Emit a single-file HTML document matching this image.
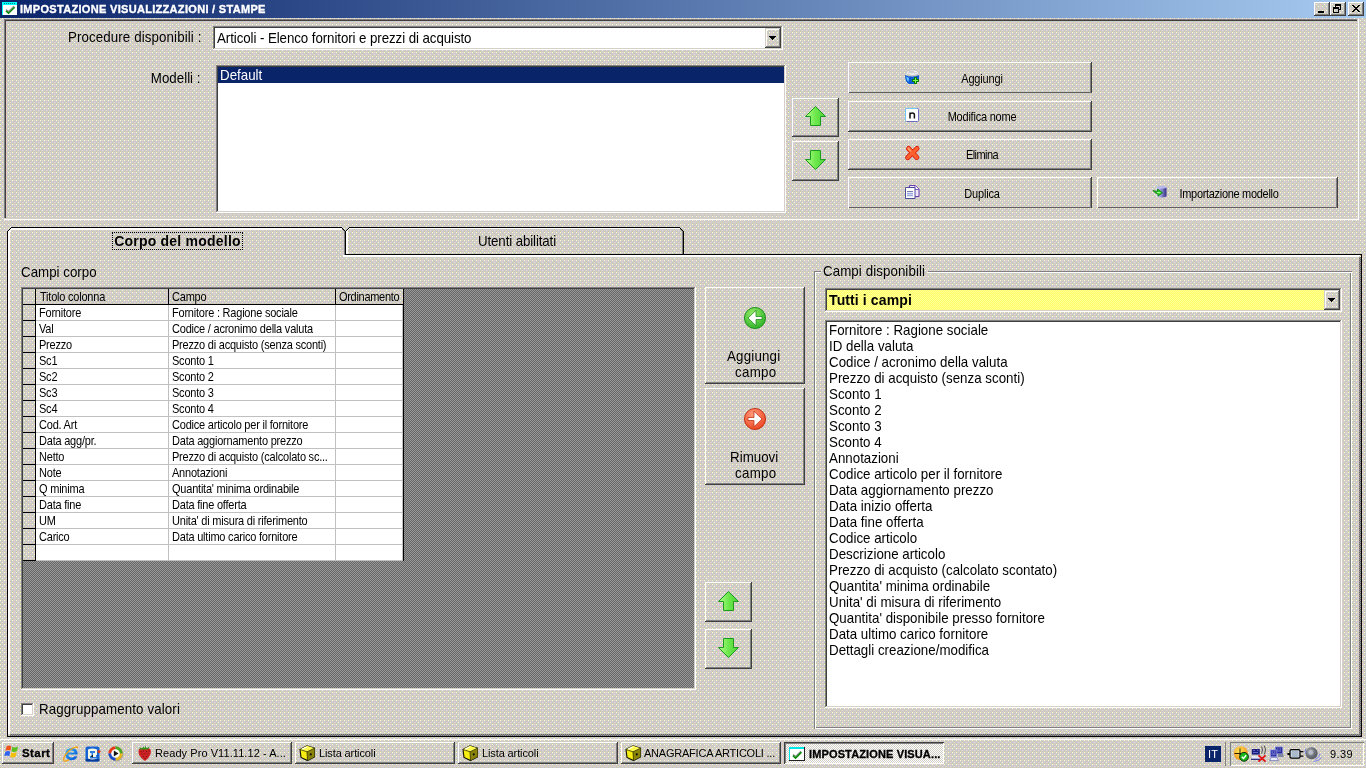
<!DOCTYPE html>
<html><head><meta charset="utf-8"><title>IMPOSTAZIONE VISUALIZZAZIONI / STAMPE</title>
<style>
*{box-sizing:border-box;margin:0;padding:0}
html,body{width:1366px;height:768px;overflow:hidden;background:#D4D0C8}
body{position:relative;font-family:"Liberation Sans",sans-serif;font-size:13.33px;color:#000;line-height:1}
.a{position:absolute;white-space:nowrap}
.btn{position:absolute;box-shadow:inset -1px -1px 0 #404040,inset 1px 1px 0 #fff,inset -2px -2px 0 #808080}
.btn2{position:absolute;box-shadow:inset -1px 0 0 #404040,inset 1px 1px 0 #fff,inset -2px 0 0 #808080,inset 0 -1px 0 #606060}
.sbtn{position:absolute;box-shadow:inset -1px -1px 0 #404040,inset 1px 1px 0 #D4D0C8,inset -2px -2px 0 #808080,inset 2px 2px 0 #fff}
.sunk{position:absolute;background:#fff;box-shadow:inset -1px -1px 0 #fff,inset 1px 1px 0 #808080,inset -2px -2px 0 #D4D0C8,inset 2px 2px 0 #404040}
.t{position:absolute;white-space:nowrap;line-height:16px;height:16px;will-change:transform}
.m{transform:scaleY(1.05);transform-origin:0 12px}
.s11{font-size:11px;letter-spacing:-0.215px;transform:scaleY(1.13);transform-origin:0 12px}
.n{transform:scaleY(1.13);transform-origin:0 12px}
.b{font-weight:bold}
.c{text-align:center}
.r{text-align:right}
svg{position:absolute;overflow:visible}
</style></head><body>

<svg width="1366" height="768" style="left:0;top:0" shape-rendering="crispEdges">
<defs>
<pattern id="dz" width="8" height="8" patternUnits="userSpaceOnUse"><rect width="8" height="8" fill="#CCCCCC"/><rect x="0" y="0" width="1" height="1" fill="#FFFFCC"/><rect x="2" y="0" width="1" height="1" fill="#FFCCCC"/><rect x="4" y="0" width="1" height="1" fill="#FFFFCC"/><rect x="6" y="1" width="1" height="1" fill="#CCCC99"/><rect x="2" y="2" width="1" height="1" fill="#FFFFCC"/><rect x="6" y="2" width="1" height="1" fill="#FFCCCC"/><rect x="0" y="3" width="1" height="1" fill="#CCCC99"/><rect x="4" y="3" width="1" height="1" fill="#CCCC99"/><rect x="0" y="4" width="1" height="1" fill="#FFFFCC"/><rect x="4" y="4" width="1" height="1" fill="#FFFFCC"/><rect x="6" y="4" width="1" height="1" fill="#FFCCCC"/><rect x="2" y="5" width="1" height="1" fill="#CCCC99"/><rect x="2" y="6" width="1" height="1" fill="#FFCCCC"/><rect x="6" y="6" width="1" height="1" fill="#FFCCCC"/><rect x="0" y="7" width="1" height="1" fill="#CCCC99"/><rect x="4" y="7" width="1" height="1" fill="#CCCC99"/></pattern>
<pattern id="gz" width="2" height="2" patternUnits="userSpaceOnUse"><rect width="2" height="2" fill="#666666"/><rect x="0" y="0" width="1" height="1" fill="#999999"/><rect x="1" y="1" width="1" height="1" fill="#999999"/></pattern>
<pattern id="yz" width="2" height="2" patternUnits="userSpaceOnUse"><rect width="2" height="2" fill="#FFFF66"/><rect x="0" y="0" width="1" height="1" fill="#FFFF99"/><rect x="1" y="1" width="1" height="1" fill="#FFFF99"/></pattern><pattern id="wz" width="2" height="2" patternUnits="userSpaceOnUse"><rect width="2" height="2" fill="#FFFFFF"/><rect x="0" y="0" width="1" height="1" fill="#D4D0C8"/><rect x="1" y="1" width="1" height="1" fill="#D4D0C8"/></pattern>
<linearGradient id="tg" x1="0" x2="1" y1="0" y2="0"><stop offset="0" stop-color="#0A246A"/><stop offset="1" stop-color="#A6CAF0"/></linearGradient>
</defs>
<rect width="1366" height="768" fill="url(#dz)"/>
<rect width="1366" height="18" fill="url(#tg)"/>
</svg>

<div class="t b" style="left:20px;top:1px;font-size:11px;color:#fff;letter-spacing:0.31px;-webkit-text-stroke:0.35px #fff">IMPOSTAZIONE VISUALIZZAZIONI / STAMPE</div>
<svg width="16" height="16" style="left:2px;top:1px" shape-rendering="crispEdges"><rect x="0" y="1" width="15" height="13" fill="#fff"/><rect x="0" y="1" width="15" height="3" fill="#00FFFF"/><rect x="0" y="1" width="1" height="13" fill="#00FFFF"/><path d="M1.5 2.5H13.5" stroke="#008080" stroke-width="1" stroke-dasharray="1 1"/><path d="M4 8.6L6.6 10.6L12.2 5.2" fill="none" stroke="#909090" stroke-width="1.4" shape-rendering="auto"/><path d="M4 9.8L6.6 12.2L12.6 6.2" fill="none" stroke="#0A8C0A" stroke-width="1.6" shape-rendering="auto"/></svg>
<svg width="16" height="14" style="left:1314px;top:2px" shape-rendering="crispEdges"><rect width="16" height="14" fill="url(#dz)"/><rect x="4" y="9" width="6" height="2" fill="#000"/></svg>
<div class="btn" style="left:1314px;top:2px;width:16px;height:14px"></div>
<svg width="16" height="14" style="left:1330px;top:2px" shape-rendering="crispEdges"><rect width="16" height="14" fill="url(#dz)"/><rect x="5" y="2" width="6" height="2" fill="#000"/><rect x="5" y="2" width="1" height="4" fill="#000"/><rect x="10" y="2" width="1" height="6" fill="#000"/><rect x="8" y="7" width="3" height="1" fill="#000"/><rect x="3" y="5" width="6" height="2" fill="#000"/><rect x="3" y="5" width="1" height="6" fill="#000"/><rect x="8" y="5" width="1" height="6" fill="#000"/><rect x="3" y="10" width="6" height="1" fill="#000"/></svg>
<div class="btn" style="left:1330px;top:2px;width:16px;height:14px"></div>
<svg width="16" height="14" style="left:1348px;top:2px" shape-rendering="crispEdges"><rect width="16" height="14" fill="url(#dz)"/><path d="M4 3h2v1h1v1h2v-1h1v-1h2v1h-1v1h-1v1h-1v1h1v1h1v1h1v1h-2v-1h-1v-1h-2v1h-1v1h-2v-1h1v-1h1v-1h1v-1h-1v-1h-1v-1h-1z" fill="#000"/></svg>
<div class="btn" style="left:1348px;top:2px;width:16px;height:14px"></div>
<div class="a" style="left:4px;top:19px;width:1355px;height:201px;box-shadow:inset -1px -1px 0 #fff,inset -2px -2px 0 #D4D0C8,inset 1px 1px 0 #808080,inset 2px 2px 0 #404040"></div>
<div class="m t r" style="left:40px;width:161.5px;top:30px;letter-spacing:0.106px">Procedure disponibili :</div>
<div class="m t r" style="left:40px;width:160.5px;top:71px">Modelli :</div>
<div class="sunk" style="left:213px;top:26px;width:570px;height:24px"></div>
<div class="m t" style="left:217px;top:31px;letter-spacing:-0.085px">Articoli - Elenco fornitori e prezzi di acquisto</div>
<svg width="16" height="20" style="left:765px;top:28px" shape-rendering="crispEdges"><rect width="16" height="20" fill="url(#dz)"/><rect x="4" y="8" width="7" height="1"/><rect x="5" y="9" width="5" height="1"/><rect x="6" y="10" width="3" height="1"/><rect x="7" y="11" width="1" height="1"/></svg>
<div class="sbtn" style="left:765px;top:28px;width:16px;height:20px"></div>
<div class="sunk" style="left:216px;top:65px;width:570px;height:148px"></div>
<div class="a" style="left:218px;top:67px;width:566px;height:16px;background:#0A246A"></div>
<div class="m t" style="left:220px;top:68px;color:#fff">Default</div>
<div class="btn" style="left:792px;top:98px;width:47px;height:39px"></div>
<svg width="21" height="20" style="left:804.5px;top:106px"><defs><linearGradient id="ag" x1="0" x2="1" y1="0" y2="0"><stop offset="0" stop-color="#B4FF8C"/><stop offset="0.5" stop-color="#6CE84C"/><stop offset="1" stop-color="#4CD038"/></linearGradient></defs><path d="M10.5 0.5 L20.5 10.5 H15.5 V19.5 H5.5 V10.5 H0.5 Z" fill="url(#ag)" stroke="#1C9C1C" stroke-width="1"/></svg>
<div class="btn" style="left:792px;top:141px;width:47px;height:40px"></div>
<svg width="21" height="20" style="left:804.5px;top:150px"><path d="M5.5 0.5 H15.5 V9.5 H20.5 L10.5 19.5 L0.5 9.5 H5.5 Z" fill="url(#ag)" stroke="#1C9C1C" stroke-width="1"/></svg>
<div class="btn2" style="left:848px;top:62px;width:244px;height:31px"></div>
<div class="n t c" style="left:881.6px;width:200px;top:71px;font-size:11px;letter-spacing:-0.164px">Aggiungi</div>
<svg width="16" height="16" style="left:904px;top:69px"><path d="M1 6 Q1 13 5 15 H12 L15 10 V6 Q8 9 1 6Z" fill="#0C5AD6"/><path d="M2.2 7.5 Q2.5 11 4.5 13 L5 9Z" fill="#66C8FF"/><ellipse cx="8.5" cy="3.7" rx="6.3" ry="2.8" fill="#F2F2F2" stroke="#B8B8B8" stroke-width="0.8"/><path d="M4 3.8h9M5 2.6h5" stroke="#BDBDBD" stroke-width="0.8"/><path d="M10 8h3v2h2v3h-2v2h-3v-2h-2v-3h2z" fill="#0A7A0A"/><path d="M11.5 9v5M9 11.5h5" stroke="#7CFF50" stroke-width="1"/></svg>
<div class="btn" style="left:848px;top:101px;width:244px;height:31px"></div>
<div class="n t c" style="left:882px;width:200px;top:109px;font-size:11px;letter-spacing:-0.218px">Modifica nome</div>
<svg width="16" height="16" style="left:904px;top:107px"><rect x="1.5" y="1.5" width="13" height="13" rx="1" fill="#fff" stroke="#6A6AC0"/><path d="M1.5 14V2.5Q1.5 1.5 2.5 1.5H13" fill="none" stroke="#70C8FF"/><path d="M6 11.5V5.5M6 7.2Q6.4 5.9 8.3 5.9Q10.4 5.9 10.4 7.8V11.5" fill="none" stroke="#111" stroke-width="1.5"/></svg>
<div class="btn" style="left:848px;top:139px;width:244px;height:31px"></div>
<div class="n t c" style="left:882px;width:200px;top:147px;font-size:11px;letter-spacing:-0.567px">Elimina</div>
<svg width="16" height="16" style="left:904px;top:145px"><path d="M4.5 3.5L12.8 12.5M13 3.5L3.6 12.6" stroke="#D41C0C" stroke-width="5" stroke-linecap="round"/><path d="M4.5 3.5L12.8 12.5M13 3.5L3.6 12.6" stroke="#FF6030" stroke-width="3.4" stroke-linecap="round"/><path d="M4.3 3.4L6.5 5.8" stroke="#FFA070" stroke-width="1.6" stroke-linecap="round"/></svg>
<div class="btn2" style="left:848px;top:177px;width:244px;height:31px"></div>
<div class="n t c" style="left:882.3px;width:200px;top:186px;font-size:11px;letter-spacing:-0.155px">Duplica</div>
<svg width="16" height="16" style="left:904px;top:183px"><path d="M5.5 2.5h6l3.5 3.5v7.5h-9.5z" fill="#EDE8FA" stroke="#6A3CB0"/><path d="M11 2.5v4h4" fill="#fff" stroke="#6A3CB0" stroke-width="0.8"/><path d="M1.5 4.5h9.5v11h-9.5z" fill="#fff" stroke="#4A4A9C"/><path d="M3 8.5h6" stroke="#7878B0"/><path d="M3 10.5h6M3 12.5h6" stroke="#9CA8E0" stroke-width="1.6"/></svg>
<div class="btn2" style="left:1097px;top:177px;width:241px;height:31px"></div>
<div class="n t c" style="left:1128.8px;width:200px;top:186px;font-size:11px;letter-spacing:-0.308px">Importazione modello</div>
<svg width="16" height="16" style="left:1152px;top:183px"><defs><linearGradient id="cy" x1="0" x2="1" y1="0" y2="0"><stop offset="0" stop-color="#D8D8FF"/><stop offset="0.55" stop-color="#8484C8"/><stop offset="1" stop-color="#2C2C84"/></linearGradient></defs><path d="M4.5 4.5Q9.5 2.5 14.5 4.5V13.5Q9.5 15.5 4.5 13.5Z" fill="url(#cy)"/><ellipse cx="9.5" cy="4.3" rx="5" ry="1.4" fill="#B8B8EC"/><path d="M1 7.5L5.5 8.5V6L10.5 9.7L6 13.2V11Q3 10.5 1 7.5Z" fill="#22CC22" stroke="#0A7A0A" stroke-width="0.8"/><path d="M5 9.6H8.5" stroke="#A0FF80" stroke-width="1.2"/></svg>
<svg width="1366" height="768" style="left:0;top:0" shape-rendering="crispEdges"><rect x="7" y="231" width="1" height="506" fill="#000"/><rect x="8" y="231" width="2" height="503" fill="#fff"/><rect x="11" y="227" width="331" height="1" fill="#000"/><rect x="11" y="228" width="331" height="2" fill="#fff"/><rect x="10" y="228" width="1" height="1" fill="#000"/><rect x="9" y="229" width="1" height="1" fill="#000"/><rect x="8" y="230" width="1" height="1" fill="#000"/><rect x="10" y="229" width="1" height="1" fill="#fff"/><rect x="9" y="230" width="1" height="1" fill="#fff"/><rect x="10" y="230" width="1" height="1" fill="#fff"/><rect x="10" y="231" width="1" height="1" fill="#fff"/><rect x="342" y="228" width="1" height="1" fill="#000"/><rect x="343" y="229" width="1" height="1" fill="#000"/><rect x="344" y="230" width="1" height="1" fill="#000"/><rect x="342" y="229" width="1" height="1" fill="#808080"/><rect x="343" y="230" width="1" height="1" fill="#808080"/><rect x="344" y="231" width="1" height="24" fill="#808080"/><rect x="345" y="231" width="1" height="24" fill="#000"/><rect x="348" y="228" width="1" height="1" fill="#000"/><rect x="347" y="229" width="1" height="1" fill="#000"/><rect x="346" y="230" width="1" height="1" fill="#000"/><rect x="348" y="229" width="1" height="1" fill="#fff"/><rect x="347" y="230" width="1" height="1" fill="#fff"/><rect x="346" y="231" width="2" height="23" fill="#fff"/><rect x="349" y="227" width="331" height="1" fill="#000"/><rect x="349" y="228" width="331" height="1" fill="#fff"/><rect x="680" y="228" width="1" height="1" fill="#000"/><rect x="681" y="229" width="1" height="1" fill="#000"/><rect x="682" y="230" width="1" height="1" fill="#000"/><rect x="680" y="229" width="1" height="1" fill="#808080"/><rect x="681" y="230" width="1" height="1" fill="#808080"/><rect x="682" y="231" width="1" height="23" fill="#808080"/><rect x="683" y="231" width="1" height="24" fill="#000"/><rect x="345" y="254" width="1017" height="1" fill="#000"/><rect x="343" y="255" width="1017" height="1" fill="#fff"/><rect x="343" y="256" width="1016" height="1" fill="#fff"/><rect x="1361" y="254" width="1" height="483" fill="#000"/><rect x="1359" y="257" width="2" height="479" fill="url(#gz)"/><rect x="7" y="736" width="1355" height="1" fill="#000"/><rect x="10" y="734" width="1351" height="2" fill="url(#gz)"/></svg>
<div class="t b c" style="left:112px;width:131px;top:233px;font-size:14px;letter-spacing:0.218px">Corpo del modello</div>
<div class="a" style="left:112px;top:232px;width:131px;height:18px;border:1px dotted #000"></div>
<div class="m t c" style="left:417px;width:200px;top:234px;letter-spacing:-0.12px">Utenti abilitati</div>
<div class="m t" style="left:21px;top:265px">Campi corpo</div>
<div class="a" style="left:21px;top:287px;width:675px;height:403px;box-shadow:inset -1px -1px 0 #fff,inset 1px 1px 0 #808080,inset -2px -2px 0 #D4D0C8,inset 2px 2px 0 #404040"></div>
<svg width="1366" height="768" style="left:0;top:0" shape-rendering="crispEdges"><rect x="23" y="289" width="671" height="399" fill="url(#gz)"/><rect x="23" y="289" width="381" height="272" fill="#000"/><rect x="23" y="289" width="12" height="15" fill="url(#dz)"/><rect x="36" y="289" width="132" height="15" fill="url(#dz)"/><rect x="169" y="289" width="166" height="15" fill="url(#dz)"/><rect x="336" y="289" width="67" height="15" fill="url(#dz)"/><rect x="23" y="305" width="12" height="15" fill="url(#dz)"/><rect x="36" y="305" width="367" height="16" fill="#C0C0C0"/><rect x="36" y="305" width="132" height="15" fill="#fff"/><rect x="169" y="305" width="166" height="15" fill="#fff"/><rect x="336" y="305" width="66" height="15" fill="#fff"/><rect x="23" y="321" width="12" height="15" fill="url(#dz)"/><rect x="36" y="321" width="367" height="16" fill="#C0C0C0"/><rect x="36" y="321" width="132" height="15" fill="#fff"/><rect x="169" y="321" width="166" height="15" fill="#fff"/><rect x="336" y="321" width="66" height="15" fill="#fff"/><rect x="23" y="337" width="12" height="15" fill="url(#dz)"/><rect x="36" y="337" width="367" height="16" fill="#C0C0C0"/><rect x="36" y="337" width="132" height="15" fill="#fff"/><rect x="169" y="337" width="166" height="15" fill="#fff"/><rect x="336" y="337" width="66" height="15" fill="#fff"/><rect x="23" y="353" width="12" height="15" fill="url(#dz)"/><rect x="36" y="353" width="367" height="16" fill="#C0C0C0"/><rect x="36" y="353" width="132" height="15" fill="#fff"/><rect x="169" y="353" width="166" height="15" fill="#fff"/><rect x="336" y="353" width="66" height="15" fill="#fff"/><rect x="23" y="369" width="12" height="15" fill="url(#dz)"/><rect x="36" y="369" width="367" height="16" fill="#C0C0C0"/><rect x="36" y="369" width="132" height="15" fill="#fff"/><rect x="169" y="369" width="166" height="15" fill="#fff"/><rect x="336" y="369" width="66" height="15" fill="#fff"/><rect x="23" y="385" width="12" height="15" fill="url(#dz)"/><rect x="36" y="385" width="367" height="16" fill="#C0C0C0"/><rect x="36" y="385" width="132" height="15" fill="#fff"/><rect x="169" y="385" width="166" height="15" fill="#fff"/><rect x="336" y="385" width="66" height="15" fill="#fff"/><rect x="23" y="401" width="12" height="15" fill="url(#dz)"/><rect x="36" y="401" width="367" height="16" fill="#C0C0C0"/><rect x="36" y="401" width="132" height="15" fill="#fff"/><rect x="169" y="401" width="166" height="15" fill="#fff"/><rect x="336" y="401" width="66" height="15" fill="#fff"/><rect x="23" y="417" width="12" height="15" fill="url(#dz)"/><rect x="36" y="417" width="367" height="16" fill="#C0C0C0"/><rect x="36" y="417" width="132" height="15" fill="#fff"/><rect x="169" y="417" width="166" height="15" fill="#fff"/><rect x="336" y="417" width="66" height="15" fill="#fff"/><rect x="23" y="433" width="12" height="15" fill="url(#dz)"/><rect x="36" y="433" width="367" height="16" fill="#C0C0C0"/><rect x="36" y="433" width="132" height="15" fill="#fff"/><rect x="169" y="433" width="166" height="15" fill="#fff"/><rect x="336" y="433" width="66" height="15" fill="#fff"/><rect x="23" y="449" width="12" height="15" fill="url(#dz)"/><rect x="36" y="449" width="367" height="16" fill="#C0C0C0"/><rect x="36" y="449" width="132" height="15" fill="#fff"/><rect x="169" y="449" width="166" height="15" fill="#fff"/><rect x="336" y="449" width="66" height="15" fill="#fff"/><rect x="23" y="465" width="12" height="15" fill="url(#dz)"/><rect x="36" y="465" width="367" height="16" fill="#C0C0C0"/><rect x="36" y="465" width="132" height="15" fill="#fff"/><rect x="169" y="465" width="166" height="15" fill="#fff"/><rect x="336" y="465" width="66" height="15" fill="#fff"/><rect x="23" y="481" width="12" height="15" fill="url(#dz)"/><rect x="36" y="481" width="367" height="16" fill="#C0C0C0"/><rect x="36" y="481" width="132" height="15" fill="#fff"/><rect x="169" y="481" width="166" height="15" fill="#fff"/><rect x="336" y="481" width="66" height="15" fill="#fff"/><rect x="23" y="497" width="12" height="15" fill="url(#dz)"/><rect x="36" y="497" width="367" height="16" fill="#C0C0C0"/><rect x="36" y="497" width="132" height="15" fill="#fff"/><rect x="169" y="497" width="166" height="15" fill="#fff"/><rect x="336" y="497" width="66" height="15" fill="#fff"/><rect x="23" y="513" width="12" height="15" fill="url(#dz)"/><rect x="36" y="513" width="367" height="16" fill="#C0C0C0"/><rect x="36" y="513" width="132" height="15" fill="#fff"/><rect x="169" y="513" width="166" height="15" fill="#fff"/><rect x="336" y="513" width="66" height="15" fill="#fff"/><rect x="23" y="529" width="12" height="15" fill="url(#dz)"/><rect x="36" y="529" width="367" height="16" fill="#C0C0C0"/><rect x="36" y="529" width="132" height="15" fill="#fff"/><rect x="169" y="529" width="166" height="15" fill="#fff"/><rect x="336" y="529" width="66" height="15" fill="#fff"/><rect x="23" y="545" width="12" height="15" fill="url(#dz)"/><rect x="36" y="545" width="367" height="16" fill="#C0C0C0"/><rect x="36" y="545" width="132" height="15" fill="#fff"/><rect x="169" y="545" width="166" height="15" fill="#fff"/><rect x="336" y="545" width="66" height="15" fill="#fff"/></svg>
<div class="t s11" style="left:40px;top:289px">Titolo colonna</div>
<div class="t s11" style="left:172px;top:289px">Campo</div>
<div class="t s11" style="left:339px;top:289px;letter-spacing:-0.3px">Ordinamento</div>
<div class="t s11" style="left:39px;top:305px">Fornitore</div>
<div class="t s11" style="left:172px;top:305px">Fornitore : Ragione sociale</div>
<div class="t s11" style="left:39px;top:321px">Val</div>
<div class="t s11" style="left:172px;top:321px">Codice / acronimo della valuta</div>
<div class="t s11" style="left:39px;top:337px">Prezzo</div>
<div class="t s11" style="left:172px;top:337px">Prezzo di acquisto (senza sconti)</div>
<div class="t s11" style="left:39px;top:353px">Sc1</div>
<div class="t s11" style="left:172px;top:353px">Sconto 1</div>
<div class="t s11" style="left:39px;top:369px">Sc2</div>
<div class="t s11" style="left:172px;top:369px">Sconto 2</div>
<div class="t s11" style="left:39px;top:385px">Sc3</div>
<div class="t s11" style="left:172px;top:385px">Sconto 3</div>
<div class="t s11" style="left:39px;top:401px">Sc4</div>
<div class="t s11" style="left:172px;top:401px">Sconto 4</div>
<div class="t s11" style="left:39px;top:417px">Cod. Art</div>
<div class="t s11" style="left:172px;top:417px">Codice articolo per il fornitore</div>
<div class="t s11" style="left:39px;top:433px">Data agg/pr.</div>
<div class="t s11" style="left:172px;top:433px">Data aggiornamento prezzo</div>
<div class="t s11" style="left:39px;top:449px">Netto</div>
<div class="t s11" style="left:172px;top:449px">Prezzo di acquisto (calcolato sc...</div>
<div class="t s11" style="left:39px;top:465px">Note</div>
<div class="t s11" style="left:172px;top:465px">Annotazioni</div>
<div class="t s11" style="left:39px;top:481px">Q minima</div>
<div class="t s11" style="left:172px;top:481px">Quantita' minima ordinabile</div>
<div class="t s11" style="left:39px;top:497px">Data fine</div>
<div class="t s11" style="left:172px;top:497px">Data fine offerta</div>
<div class="t s11" style="left:39px;top:513px">UM</div>
<div class="t s11" style="left:172px;top:513px">Unita' di misura di riferimento</div>
<div class="t s11" style="left:39px;top:529px">Carico</div>
<div class="t s11" style="left:172px;top:529px">Data ultimo carico fornitore</div>
<div class="sunk" style="left:21px;top:703px;width:13px;height:13px"></div>
<div class="m t" style="left:39px;top:702px;letter-spacing:0.116px">Raggruppamento valori</div>
<div class="btn" style="left:705px;top:287px;width:100px;height:97px"></div>
<svg width="24" height="24" style="left:743px;top:306px"><defs><radialGradient id="rg287" cx="0.4" cy="0.3" r="0.8"><stop offset="0" stop-color="#98EC68"/><stop offset="1" stop-color="#22AC22"/></radialGradient></defs><circle cx="12" cy="12" r="10.6" fill="url(#rg287)" stroke="#0C800C" stroke-width="0.8"/><path d="M-7 0L1 -7.7V-1.5H7V1.5H1V7.7Z" transform="translate(12,12)" fill="#fff" stroke="#0C800C" stroke-width="0.7"/></svg>
<div class="m t" style="left:726.5px;top:349px;letter-spacing:0.177px">Aggiungi</div>
<div class="m t" style="left:734.5px;top:365px;letter-spacing:0.298px">campo</div>
<div class="btn" style="left:705px;top:388px;width:100px;height:97px"></div>
<svg width="24" height="24" style="left:743px;top:407px"><defs><radialGradient id="rg388" cx="0.4" cy="0.3" r="0.8"><stop offset="0" stop-color="#FF9C7C"/><stop offset="1" stop-color="#EA3C1A"/></radialGradient></defs><circle cx="12" cy="12" r="10.6" fill="url(#rg388)" stroke="#B82000" stroke-width="0.8"/><path d="M7 0L-1 -7.7V-1.5H-7V1.5H-1V7.7Z" transform="translate(12,12)" fill="#fff" stroke="#B82000" stroke-width="0.7"/></svg>
<div class="m t" style="left:729.5px;top:450px;letter-spacing:0.022px">Rimuovi</div>
<div class="m t" style="left:734.5px;top:466px;letter-spacing:0.298px">campo</div>
<div class="btn" style="left:705px;top:582px;width:47px;height:40px"></div>
<svg width="21" height="20" style="left:717.5px;top:591px"><defs><linearGradient id="ag" x1="0" x2="1" y1="0" y2="0"><stop offset="0" stop-color="#B4FF8C"/><stop offset="0.5" stop-color="#6CE84C"/><stop offset="1" stop-color="#4CD038"/></linearGradient></defs><path d="M10.5 0.5 L20.5 10.5 H15.5 V19.5 H5.5 V10.5 H0.5 Z" fill="url(#ag)" stroke="#1C9C1C" stroke-width="1"/></svg>
<div class="btn" style="left:705px;top:629px;width:47px;height:40px"></div>
<svg width="21" height="20" style="left:717.5px;top:638px"><path d="M5.5 0.5 H15.5 V9.5 H20.5 L10.5 19.5 L0.5 9.5 H5.5 Z" fill="url(#ag)" stroke="#1C9C1C" stroke-width="1"/></svg>
<div class="a" style="left:814px;top:271px;width:538px;height:458px;box-shadow:inset 1px 1px 0 #808080,inset 2px 2px 0 #fff,inset -1px -1px 0 #fff,inset -2px -2px 0 #808080"></div>
<svg width="110" height="4" style="left:821px;top:270px" shape-rendering="crispEdges"><rect width="107" height="4" fill="url(#dz)"/></svg>
<div class="m t" style="left:823px;top:264px;letter-spacing:0.073px">Campi disponibili</div>
<svg width="1366" height="768" style="left:0;top:0" shape-rendering="crispEdges"><rect x="827" y="290" width="513" height="20" fill="url(#yz)"/></svg>
<div class="sunk" style="left:825px;top:288px;width:517px;height:24px;background:transparent"></div>
<div class="t b" style="left:829px;top:292px;font-size:14px;letter-spacing:0.115px">Tutti i campi</div>
<svg width="16" height="20" style="left:1324px;top:290px" shape-rendering="crispEdges"><rect width="16" height="20" fill="url(#dz)"/><rect x="4" y="8" width="7" height="1"/><rect x="5" y="9" width="5" height="1"/><rect x="6" y="10" width="3" height="1"/><rect x="7" y="11" width="1" height="1"/></svg>
<div class="sbtn" style="left:1324px;top:290px;width:16px;height:20px"></div>
<div class="sunk" style="left:825px;top:320px;width:517px;height:388px"></div>
<div class="m t" style="left:829px;top:323px">Fornitore : Ragione sociale</div>
<div class="m t" style="left:829px;top:339px">ID della valuta</div>
<div class="m t" style="left:829px;top:355px">Codice / acronimo della valuta</div>
<div class="m t" style="left:829px;top:371px">Prezzo di acquisto (senza sconti)</div>
<div class="m t" style="left:829px;top:387px">Sconto 1</div>
<div class="m t" style="left:829px;top:403px">Sconto 2</div>
<div class="m t" style="left:829px;top:419px">Sconto 3</div>
<div class="m t" style="left:829px;top:435px">Sconto 4</div>
<div class="m t" style="left:829px;top:451px">Annotazioni</div>
<div class="m t" style="left:829px;top:467px">Codice articolo per il fornitore</div>
<div class="m t" style="left:829px;top:483px">Data aggiornamento prezzo</div>
<div class="m t" style="left:829px;top:499px">Data inizio offerta</div>
<div class="m t" style="left:829px;top:515px">Data fine offerta</div>
<div class="m t" style="left:829px;top:531px">Codice articolo</div>
<div class="m t" style="left:829px;top:547px">Descrizione articolo</div>
<div class="m t" style="left:829px;top:563px">Prezzo di acquisto (calcolato scontato)</div>
<div class="m t" style="left:829px;top:579px">Quantita' minima ordinabile</div>
<div class="m t" style="left:829px;top:595px">Unita' di misura di riferimento</div>
<div class="m t" style="left:829px;top:611px">Quantita' disponibile presso fornitore</div>
<div class="m t" style="left:829px;top:627px">Data ultimo carico fornitore</div>
<div class="m t" style="left:829px;top:643px">Dettagli creazione/modifica</div>
<div class="a" style="left:0;top:739px;width:1366px;height:1px;background:#fff"></div>
<div class="btn" style="left:2px;top:742px;width:52px;height:22px"></div>
<svg width="16" height="16" style="left:4px;top:744px"><path d="M2.4 2.8Q4.6 0.6 7.4 2.4L6.4 6.8Q3.8 5.2 1.4 7.2Z" fill="#F0541C"/><path d="M8.4 2.8Q11 4.6 14.2 2.2L13 6.8Q10 9 7.4 7.2Z" fill="#5CC01C"/><path d="M1.2 8.2Q3.6 6.2 6.2 7.8L5.2 12.4Q2.6 10.6 0.2 12.6Z" fill="#2C64F0"/><path d="M7.2 8.2Q9.8 10 12.8 7.8L11.6 12.4Q8.8 14.6 6.2 12.8Z" fill="#F4C00C"/></svg>
<div class="t b" style="left:22px;top:745px;font-size:11.5px;letter-spacing:0.42px;-webkit-text-stroke:0.3px #000">Start</div>
<svg width="16" height="16" style="left:63px;top:746px"><defs><linearGradient id="ie" x1="0" x2="1" y1="0" y2="1"><stop offset="0" stop-color="#2CB4F8"/><stop offset="1" stop-color="#0C50D0"/></linearGradient></defs><path d="M14.6 8.6H5.2Q5.6 11.6 8.6 11.6Q10.6 11.6 11.6 10.2H14.3Q13 14.3 8.6 14.3Q2.6 14.3 2.3 8Q2.6 1.9 8.6 1.9Q14.8 1.9 14.6 8.6ZM5.3 6.6H11.6Q11.2 4.4 8.5 4.4Q5.9 4.4 5.3 6.6Z" fill="url(#ie)"/><path d="M13.6 2.2Q15.6 0.2 12.4 1.2Q7 3 3 8.2Q-0.6 13.4 1.2 14.8Q2.8 15.8 6 13.6" fill="none" stroke="#F2A414" stroke-width="1.4"/></svg>
<svg width="17" height="16" style="left:85px;top:746px"><rect x="0.5" y="0.5" width="14" height="15" rx="2" fill="#1664D4"/><rect x="0.5" y="13" width="14" height="2.5" rx="1" fill="#0A3C9C"/><path d="M3 3.5Q7.5 1.5 12 3.5V12.5Q7.5 14.5 3 12.5Z" fill="#F4F6E4"/><path d="M5 5h5v2H8v4h3V9h1v3.5H5V10h1.5V7H5Z" fill="#2C7CE4"/><path d="M8 9l-2.5 1.2L8 11.4Z" fill="#111"/><circle cx="14" cy="5.6" r="1.6" fill="#D83C1C"/></svg>
<svg width="16" height="16" style="left:108px;top:746px"><circle cx="7.5" cy="7.5" r="7.2" fill="#606060" opacity="0.35" transform="translate(0.8,0.8)"/><path d="M7.5 7.5L7.5 0.3A7.2 7.2 0 0 0 0.3 7.5Z" fill="#E83818"/><path d="M7.5 7.5L14.7 7.5A7.2 7.2 0 0 0 7.5 0.3Z" fill="#4CA81C"/><path d="M7.5 7.5L7.5 14.7A7.2 7.2 0 0 0 14.7 7.5Z" fill="#E8B418"/><path d="M7.5 7.5L0.3 7.5A7.2 7.2 0 0 0 7.5 14.7Z" fill="#1C4CC8"/><circle cx="7.5" cy="7.5" r="4.3" fill="#fff"/><path d="M5.8 4.6L10.6 7.5L5.8 10.4Z" fill="#181818"/></svg>
<div class="btn" style="left:132px;top:742px;width:160px;height:22px"></div>
<svg width="16" height="16" style="left:137px;top:745px"><path d="M7.5 3.2Q11 2.4 13.2 4Q14.6 6 13.6 9Q12 13.5 8 16Q4 13.8 1.8 9.5Q0.6 6 2.2 4Q4.4 2.4 7.5 3.2Z" fill="#CC2424"/><path d="M3.5 6.5h1M6 6h1M9 6.5h1M11.5 6h1M4.5 9h1M7.5 8.8h1M10.5 9h1M6 11.5h1M9 11.5h1M7.5 13.6h1" stroke="#7A0C0C" stroke-width="1"/><path d="M2.5 2.2L5 3.6L6.5 1.6L8 3.4L8.3 0.2L9.6 3.2L12.5 1.8L11.3 4.2L7.5 4.6L3 4.4Z" fill="#2E9A1E"/></svg>
<div class="t " style="left:155px;top:745px;font-size:11px;letter-spacing:0.068px">Ready Pro V11.11.12 - A...</div>
<div class="btn" style="left:295px;top:742px;width:160px;height:22px"></div>
<svg width="16" height="16" style="left:298.5px;top:745px"><path d="M1 4.5L8 0.8L15.5 3.2L15.5 11.8L8.5 15.6L2 12.4Z" fill="#F6EE12" stroke="#101000" stroke-width="1.1"/><path d="M8 6.8L15.5 3.2L15.5 11.8L8.5 15.6Z" fill="#8A8408"/><path d="M1 4.5L8 0.8L15.5 3.2L8 6.8Z" fill="#FFFA50"/><path d="M3 4.2L7.6 2" stroke="#fff" stroke-width="1.2"/><path d="M1 4.5L8 6.8L15.5 3.2M8 6.8L8.5 15.6" stroke="#303000" stroke-width="0.8" fill="none"/><circle cx="11.8" cy="9.4" r="1.1" fill="#101010"/></svg>
<div class="t " style="left:318.5px;top:745px;font-size:11px;letter-spacing:-0.113px">Lista articoli</div>
<div class="btn" style="left:458px;top:742px;width:160px;height:22px"></div>
<svg width="16" height="16" style="left:461.5px;top:745px"><path d="M1 4.5L8 0.8L15.5 3.2L15.5 11.8L8.5 15.6L2 12.4Z" fill="#F6EE12" stroke="#101000" stroke-width="1.1"/><path d="M8 6.8L15.5 3.2L15.5 11.8L8.5 15.6Z" fill="#8A8408"/><path d="M1 4.5L8 0.8L15.5 3.2L8 6.8Z" fill="#FFFA50"/><path d="M3 4.2L7.6 2" stroke="#fff" stroke-width="1.2"/><path d="M1 4.5L8 6.8L15.5 3.2M8 6.8L8.5 15.6" stroke="#303000" stroke-width="0.8" fill="none"/><circle cx="11.8" cy="9.4" r="1.1" fill="#101010"/></svg>
<div class="t " style="left:481.5px;top:745px;font-size:11px;letter-spacing:-0.113px">Lista articoli</div>
<div class="btn" style="left:621px;top:742px;width:160px;height:22px"></div>
<svg width="16" height="16" style="left:624.5px;top:745px"><path d="M1 4.5L8 0.8L15.5 3.2L15.5 11.8L8.5 15.6L2 12.4Z" fill="#F6EE12" stroke="#101000" stroke-width="1.1"/><path d="M8 6.8L15.5 3.2L15.5 11.8L8.5 15.6Z" fill="#8A8408"/><path d="M1 4.5L8 0.8L15.5 3.2L8 6.8Z" fill="#FFFA50"/><path d="M3 4.2L7.6 2" stroke="#fff" stroke-width="1.2"/><path d="M1 4.5L8 6.8L15.5 3.2M8 6.8L8.5 15.6" stroke="#303000" stroke-width="0.8" fill="none"/><circle cx="11.8" cy="9.4" r="1.1" fill="#101010"/></svg>
<div class="t " style="left:644px;top:745px;font-size:11px;letter-spacing:-0.222px">ANAGRAFICA ARTICOLI ...</div>
<svg width="160" height="22" style="left:784px;top:742px" shape-rendering="crispEdges"><rect width="160" height="22" fill="url(#wz)"/></svg>
<div class="a" style="left:784px;top:742px;width:160px;height:22px;box-shadow:inset 1px 1px 0 #404040,inset -1px -1px 0 #fff,inset 2px 2px 0 #808080"></div>
<svg width="16" height="16" style="left:789px;top:746px"><g shape-rendering="crispEdges"><rect x="0" y="1" width="15" height="13" fill="#fff"/><rect x="0" y="1" width="15" height="2" fill="#00E8E8"/><rect x="0" y="1" width="1" height="13" fill="#00E8E8"/><rect x="0" y="14" width="16" height="1" fill="#202020"/><rect x="15" y="1" width="1" height="14" fill="#202020"/></g><path d="M4 8.4L6.6 10.4L12 5.2" fill="none" stroke="#909090" stroke-width="1.3"/><path d="M4 9.6L6.6 12L12.4 6.2" fill="none" stroke="#0A8C0A" stroke-width="1.7"/></svg>
<div class="t b" style="left:809px;top:746px;font-size:11px;letter-spacing:0.131px;-webkit-text-stroke:0.3px #000">IMPOSTAZIONE VISUA...</div>
<div class="a c" style="left:1205px;top:746px;width:16px;height:16px;background:#0A246A"></div><div class="t c" style="left:1205px;top:746px;width:16px;color:#fff;font-size:11px">IT</div>
<div class="a" style="left:1225px;top:742px;width:1px;height:24px;background:#808080"></div>
<div class="a" style="left:1230px;top:742px;width:134px;height:24px;box-shadow:inset 1px 1px 0 #808080,inset -1px -1px 0 #fff"></div>
<svg width="100" height="20" style="left:1232px;top:745px"><defs><radialGradient id="sun" cx="0.4" cy="0.35" r="0.7"><stop offset="0" stop-color="#FFE858"/><stop offset="1" stop-color="#F08C14"/></radialGradient><radialGradient id="spk" cx="0.4" cy="0.4" r="0.7"><stop offset="0" stop-color="#D0D0D8"/><stop offset="0.5" stop-color="#70747C"/><stop offset="1" stop-color="#4C5058"/></radialGradient></defs><circle cx="8.8" cy="8.3" r="7" fill="url(#sun)"/><path d="M2.5 8.5H9M8 3.5V10" stroke="#2A1C00" stroke-width="1"/><circle cx="12" cy="11.8" r="4.4" fill="#1CB81C" stroke="#0A300A" stroke-width="1"/><path d="M9.8 11.8L11.4 13.4L14.2 10.2" stroke="#fff" stroke-width="1.4" fill="none"/><rect x="19.8" y="4" width="8" height="5.6" fill="#1C1C7C"/><path d="M21 5.5h2M25 5.5h1.5M21 7.5h5" stroke="#6C78D8" stroke-width="0.8"/><path d="M19 13.8L21 11H26.5L28 13.8Z" fill="#E4E8F8"/><path d="M19 14.3H28" stroke="#20207C" stroke-width="1.2"/><path d="M29.6 1.5Q31.4 5 29.6 8.6M32.4 0.6Q34.6 5 32.4 9.4" stroke="#404040" stroke-width="0.9" fill="none"/><path d="M26.4 10.4L33.6 16.6M33.6 10.4L26.4 16.6" stroke="#E01010" stroke-width="1.8"/><rect x="43.4" y="2" width="7" height="6.8" fill="#2C2C98" stroke="#7C84D8" stroke-width="0.8"/><path d="M45 4h1.5M47.5 4H49M45 6h4" stroke="#8C98E8" stroke-width="0.8"/><path d="M46 9h5l1 3h-6z" fill="#8088A0"/><rect x="38.4" y="5" width="6.4" height="6.8" fill="#3434A4" stroke="#8C94E4" stroke-width="0.8"/><path d="M39.6 7h1.5M42 7h1.5M39.6 9h4" stroke="#A0ACF0" stroke-width="0.8"/><path d="M37.6 15.6L39.2 12.4H45L46.4 15.6Z" fill="#E8ECFC" stroke="#5058A8" stroke-width="0.6"/><rect x="58" y="4.6" width="10" height="8.6" rx="1.4" fill="#C4D0DC" stroke="#000" stroke-width="1.2"/><path d="M61 5.5v7M63 5.5v7M65 5.5v7" stroke="#8CA0B8" stroke-width="0.9"/><path d="M55.4 9H58" stroke="#000" stroke-width="2"/><path d="M68 6.6H71.4M68 11.2H71.4" stroke="#000" stroke-width="1.2"/><circle cx="79.6" cy="8.2" r="6" fill="url(#spk)"/><circle cx="78.8" cy="7.4" r="2.2" fill="#B8BCC8"/><path d="M74 3.6Q72.4 6 73.4 8.6" stroke="#7080E0" stroke-width="1" fill="none"/><path d="M83 14.4Q87.4 13 88 8.6M81.6 16.4Q87 16.4 89.6 12.4" stroke="#7C88F0" stroke-width="1" fill="none"/></svg>
<div class="t" style="left:1330px;top:746px;font-size:11px;letter-spacing:0.4px">9.39</div>
</body></html>
